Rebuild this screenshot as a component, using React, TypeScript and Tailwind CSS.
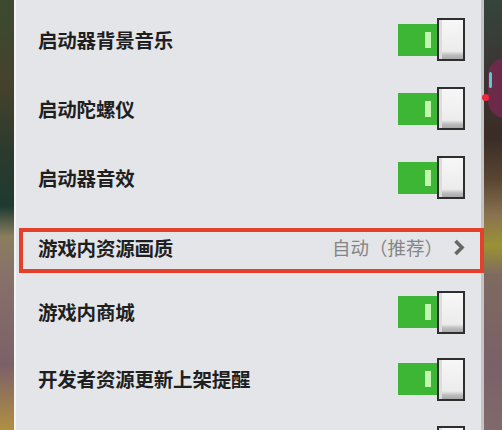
import React from "react";

const font = { fontFamily: '"Noto Sans CJK SC", "Noto Sans", sans-serif' };

function Toggle() {
  return (
    <div className="flex items-center">
      <div className="w-[40px] h-[32px] bg-[#3db535] flex items-center justify-end pr-[7px]">
        <div className="w-[6px] h-[16px] bg-[#c4f7ae]" />
      </div>
      <div className="-ml-[1px] w-[28px] h-[43px] border-2 border-[#2e2e2e] bg-[linear-gradient(to_bottom,#f7f7f7_0%,#ececec_80%,#bdbdbd_90%,#a9a9a9_100%)] flex">
        <div className="w-[3px] h-full bg-[#dcdcdc]" />
      </div>
    </div>
  );
}

function Row({ label, h }: { label: string; h: string }) {
  return (
    <div className={`${h} shrink-0 flex items-center justify-between pl-[22px] pr-[16px]`}>
      <span className="text-[19.5px] font-bold text-[#1f1f1f] tracking-[-0.2px]">{label}</span>
      <Toggle />
    </div>
  );
}

export default function App() {
  return (
    <div className="w-[502px] h-[430px] overflow-hidden flex" style={font}>
      <div className="w-[14px] h-full bg-[linear-gradient(to_bottom,#3c4a30_0%,#45422c_20%,#2c3a2e_35%,#1f3a31_48%,#8a7e5e_55%,#86706a_65%,#7c6068_85%,#b09042_100%)]" />
      <div className="flex-1 h-full bg-[#e4e5e9] border-l-2 border-[#f3f3f3] border-r-[3px] border-r-[#c4c4c6] pt-[5px] flex flex-col">
        <Row label="启动器背景音乐" h="h-[69px]" />
        <Row label="启动陀螺仪" h="h-[69px]" />
        <Row label="启动器音效" h="h-[69px]" />
        <div className="h-[67px] shrink-0 pt-[16px] pl-[3px] -mr-[3px]">
          <div className="h-[45px] border-[4px] border-[#e4402c] flex items-center justify-between pl-[15px] pr-[15px] pb-[6px]">
            <span className="text-[19.5px] font-bold text-[#1f1f1f] tracking-[-0.2px]">游戏内资源画质</span>
            <div className="flex items-center gap-[10px]">
              <span className="text-[18.5px] text-[#858585]">自动（推荐）</span>
              <svg width="12" height="17" viewBox="0 0 12 17">
                <path d="M2.5 2 L9 8.5 L2.5 15" fill="none" stroke="#666" strokeWidth="3.6" />
              </svg>
            </div>
          </div>
        </div>
        <Row label="游戏内商城" h="h-[66px]" />
        <Row label="开发者资源更新上架提醒" h="h-[68px]" />
        <Row label="" h="h-[68px]" />
      </div>
      <div className="relative w-[18px] h-full bg-[linear-gradient(to_bottom,#34453a_0%,#3a3a36_12%,#3a2c26_32%,#5a4632_42%,#8a7250_50%,#9a9234_57%,#7e6a60_64%,#7a6068_85%,#806a6a_100%)]">
        <div className="absolute left-[4px] top-[58px] w-[34px] h-[60px] rounded-full bg-[#6a2a48]" />
        <div className="absolute left-[5px] top-[72px] w-[3px] h-[16px] rounded-full bg-[#4ad0d0]" />
        <div className="absolute -left-[2px] top-[94px] w-[7px] h-[7px] rounded-full bg-[#f0283c]" />
      </div>
    </div>
  );
}
